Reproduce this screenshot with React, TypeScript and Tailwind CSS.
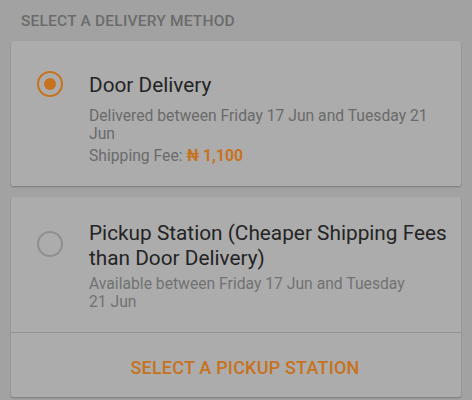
export default function App() {
  return (
    <div
      className="w-[472px] h-[400px] overflow-hidden bg-[#a2a2a2] px-[11px]"
      style={{ fontFamily: "Roboto, 'Liberation Sans', sans-serif" }}
    >
      <div className="pt-[12px] pb-[11px] pl-[10px] text-[15.5px] font-medium tracking-[0.2px] text-[#6b6b6b] leading-[18px]">
        SELECT A DELIVERY METHOD
      </div>

      {/* door delivery */}
      <div className="bg-[#acacac] rounded-[2px] shadow-[0_1px_2px_rgba(0,0,0,0.25)] flex pt-[27px] h-[145px]">
        <div className="w-[78px] flex justify-center pt-[3px]">
          <Radio checked />
        </div>
        <div className="flex-1 pr-[20px] pt-[5px]">
          <div className="text-[20.8px] leading-[24px] text-[#242424]">Door Delivery</div>
          <div className="mt-[10px] text-[15.7px] leading-[18px] text-[#6a6a6a] pr-[4px]">
            Delivered between Friday 17 Jun and Tuesday 21 Jun
          </div>
          <div className="mt-[4px] text-[15.7px] leading-[18px] text-[#6a6a6a]">
            Shipping Fee: <span className="font-bold text-[#c7721d]">₦ 1,100</span>
          </div>
        </div>
      </div>

      {/* pickup station */}
      <div className="mt-[11px] bg-[#acacac] rounded-[2px] shadow-[0_1px_2px_rgba(0,0,0,0.25)] h-[200px]">
        <div className="flex pt-[24px] border-b border-[#959595] h-[136px]">
          <div className="w-[78px] flex justify-center pt-[10px]">
            <Radio />
          </div>
          <div className="flex-1 pr-[2px]">
            <div className="text-[20.8px] leading-[25px] text-[#242424]">
              Pickup Station (Cheaper Shipping Fees than Door Delivery)
            </div>
            <div className="mt-[4px] text-[15.7px] leading-[18px] text-[#727272] pr-[50px]">
              Available between Friday 17 Jun and Tuesday 21 Jun
            </div>
          </div>
        </div>
        <div className="h-[64px] flex items-center justify-center pt-[4px] pl-[18px]">
          <span className="text-[18px] font-medium text-[#c7721d] tracking-[0.2px]">SELECT A PICKUP STATION</span>
        </div>
      </div>
    </div>
  );
}

function Radio({ checked = false }: { checked?: boolean }) {
  return (
    <div
      className={`w-[26px] h-[26px] rounded-full border-[2.5px] flex items-center justify-center ${
        checked ? "border-[#c7721d]" : "border-[#8f8f8f]"
      }`}
    >
      {checked && <div className="w-[12px] h-[12px] rounded-full bg-[#c7721d]" />}
    </div>
  );
}
